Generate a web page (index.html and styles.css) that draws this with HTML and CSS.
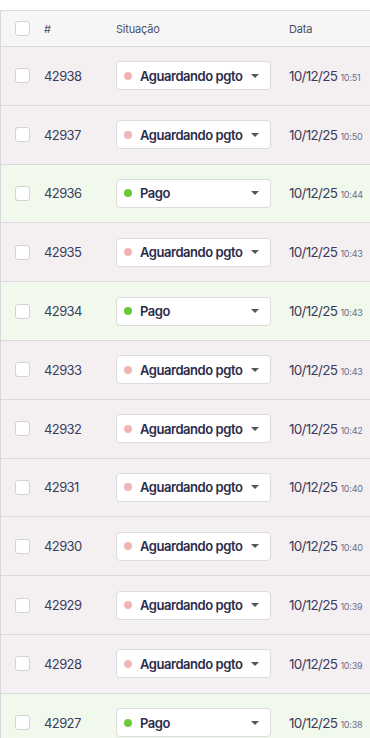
FILE: index.html
```html
<!DOCTYPE html>
<html lang="pt-BR">
<head>
    <meta charset="UTF-8">
    <meta name="viewport" content="width=device-width, initial-scale=1.0">
    <title>Pedidos</title>
    <link rel="stylesheet" href="styles.css">
</head>
<body>
    <div class="top-strip"></div>
    <div class="orders">
        <div class="row head">
            <div class="cell check"><span class="box"></span></div>
            <div class="cell">#</div>
            <div class="cell">Situação</div>
            <div class="cell">Data</div>
        </div>
        <div id="rows"></div>
    </div>

    <script>
        // ultimos pedidos da loja
        let orders = [
            { id: 42938, paid: false, time: '10:51' },
            { id: 42937, paid: false, time: '10:50' },
            { id: 42936, paid: true, time: '10:44' },
            { id: 42935, paid: false, time: '10:43' },
            { id: 42934, paid: true, time: '10:43' },
            { id: 42933, paid: false, time: '10:43' },
            { id: 42932, paid: false, time: '10:42' },
            { id: 42931, paid: false, time: '10:40' },
            { id: 42930, paid: false, time: '10:40' },
            { id: 42929, paid: false, time: '10:39' },
            { id: 42928, paid: false, time: '10:39' },
            { id: 42927, paid: true, time: '10:38' }
        ];

        let list = document.getElementById('rows');
        orders.forEach(function(o) {
            let row = document.createElement('div');
            row.className = 'row ' + (o.paid ? 'paid' : 'pending');
            row.innerHTML =
                `<div class="cell check"><span class="box"></span></div>` +
                `<div class="cell num">${o.id}</div>` +
                `<div class="cell"><div class="status">` +
                    `<span class="dot"></span>` +
                    `<span class="label">${o.paid ? 'Pago' : 'Aguardando pgto'}</span>` +
                    `<span class="caret"></span>` +
                `</div></div>` +
                `<div class="cell date">10/12/25 <small>${o.time}</small></div>`;
            list.appendChild(row);
        });
    </script>
</body>
</html>
```

FILE: styles.css
```css
body {
    margin: 0;
    overflow: hidden;
    background: #fff;
    font-family: Inter, "Noto Sans", sans-serif;
}
.top-strip {
    height: 10px;
    background: #fff;
}
.orders {
    border-top: 1px solid #dcdce0;
    border-left: 1px solid #d6d6dc;
}
.row {
    display: grid;
    grid-template-columns: 43px 72px 173px 1fr;
    align-items: center;
    height: 57.8px;
    border-bottom: 1px solid #d8d8de;
}
.row.head {
    height: 35px;
    background: #f6f6f7;
    font-size: 11px;
    letter-spacing: -0.2px;
    color: #4c4f60;
}
.row.pending {
    background: #f4f0f1;
}
.row.paid {
    background: #f1f8ec;
}
.cell.check {
    padding-left: 14px;
    display: flex;
    align-items: center;
}
.box {
    width: 13px;
    height: 13px;
    border: 1px solid #d2d2d8;
    border-radius: 3px;
    background: #fff;
}
.num {
    font-size: 13px;
    letter-spacing: -0.6px;
    color: #3b3d5c;
}
.status {
    width: 146px;
    height: 27px;
    border: 1px solid #dcdce0;
    border-radius: 4px;
    background: #fff;
    display: flex;
    align-items: center;
    padding-left: 7px;
}
.dot {
    width: 8px;
    height: 8px;
    border-radius: 50%;
    background: #f0b5b5;
    margin-right: 8px;
}
.paid .dot {
    background: #6cc93a;
}
.label {
    flex: 1;
    font-size: 13px;
    font-weight: 600;
    letter-spacing: -0.45px;
    color: #2b2c4a;
}
.caret {
    width: 0;
    height: 0;
    border-left: 4px solid transparent;
    border-right: 4px solid transparent;
    border-top: 4px solid #555;
    margin-right: 11px;
}
.date {
    font-size: 13.5px;
    letter-spacing: -0.7px;
    color: #3c3a60;
    white-space: nowrap;
}
.date small {
    font-size: 9px;
    letter-spacing: -0.2px;
    color: #6a6e8e;
}
```
